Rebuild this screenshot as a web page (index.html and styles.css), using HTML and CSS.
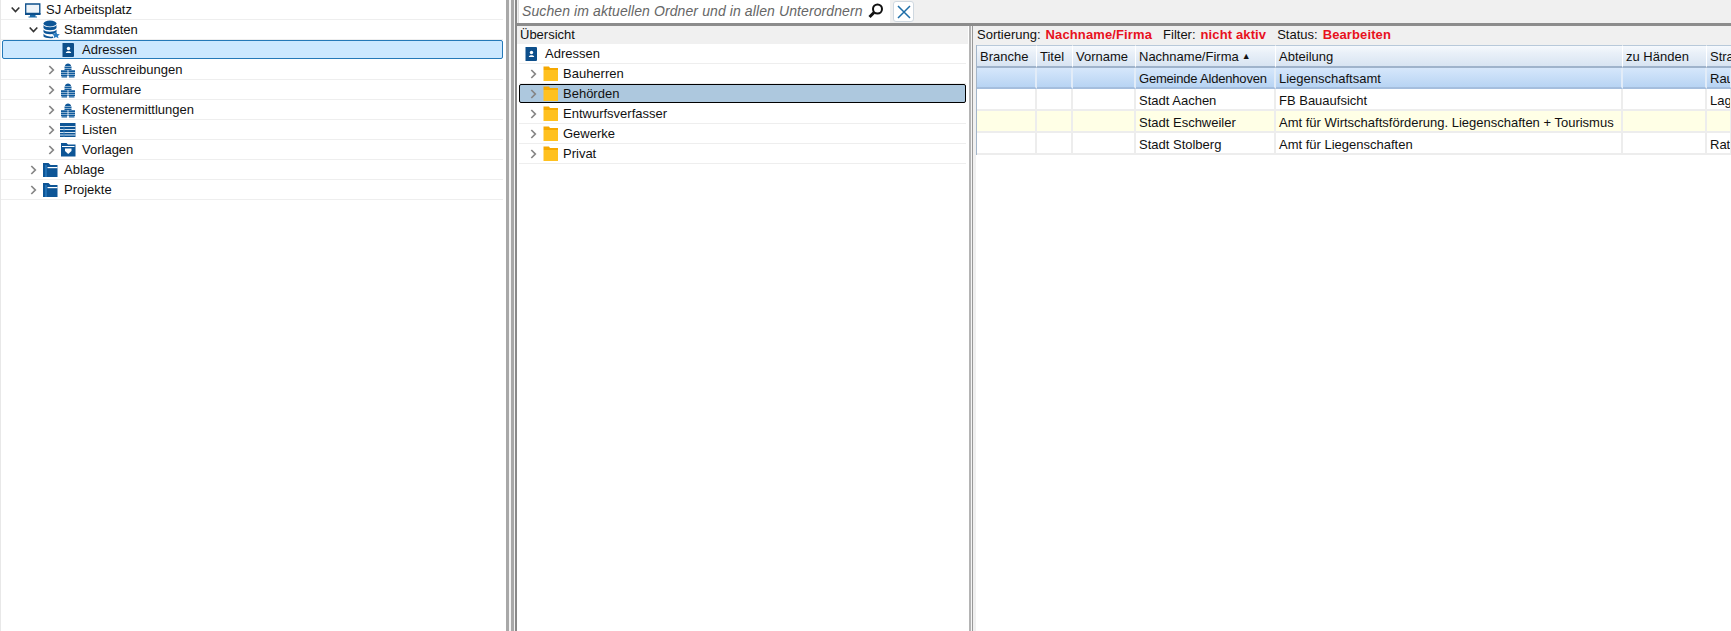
FILE: index.html
```html
<!DOCTYPE html>
<html lang="de">
<head>
<meta charset="utf-8">
<title>SJ Arbeitsplatz</title>
<link rel="stylesheet" href="styles.css">
</head>
<body>
<svg class="defs" width="0" height="0" aria-hidden="true">
  <defs>
    <symbol id="chev-r" viewBox="0 0 18 20"><path d="M7.300 7 L11.300 11 L7.300 15" fill="none" stroke="#858585" stroke-width="1.700"/></symbol>
    <symbol id="chev-d" viewBox="0 0 18 20"><path d="M5.700 8.500 L9.500 12.500 L13.300 8.500" fill="none" stroke="#333" stroke-width="1.600"/></symbol>
    <symbol id="monitor" viewBox="0 0 18 20"><path d="M1.700 5 H15.800 V14.500 H1.700 Z" fill="#eef4f9" stroke="#0d4f8b" stroke-width="1.300"/><path d="M1 14 H16.500 V16 H1 Z" fill="#0d4f8b"/><path d="M6 16 H11.500 V17.500 H13 V18.500 H4.500 V17.500 H6 Z" fill="#1a6aa8"/></symbol>
    <symbol id="db" viewBox="0 0 18 20"><ellipse cx="8" cy="4.500" rx="6.500" ry="3" fill="#0d5596"/><path d="M1.500 6 C3 9 13 9 14.500 6 V9 C13 12 3 12 1.500 9 Z" fill="#0d5596"/><path d="M1.500 10.500 C3 13.500 13 13.500 14.500 10.500 V13 C13 16 3 16 1.500 13 Z" fill="#0d5596"/><path d="M1.500 14.500 C3 17.500 10 18 11 17.500 V19 C7 19.500 3 19 1.500 17.500 Z" fill="#0d5596"/><path d="M14 12.500 L15.200 15 L17.800 15.200 L15.900 16.900 L16.500 19.300 L14 18 L11.500 19.300 L12.100 16.900 L10.200 15.200 L12.800 15 Z" fill="#2a7cc0"/></symbol>
    <symbol id="book" viewBox="0 0 18 20"><path d="M3 4 H13 Q14 4 14 5 V17 Q14 18 13 18 H3 Z" fill="#0d4f8b"/><path d="M2 5 H3.500 M2 7 H3.500 M2 9 H3.500 M2 11 H3.500 M2 13 H3.500 M2 15 H3.500 M2 17 H3.500" stroke="#0d4f8b" stroke-width="1"/><circle cx="8.500" cy="9.500" r="1.700" fill="#fff"/><path d="M5.800 14 C5.800 11.500 11.200 11.500 11.200 14 Z" fill="#fff"/></symbol>
    <symbol id="stack" viewBox="0 0 18 20"><path d="M5 7 C5 3.500 11 3.500 11 7 Z" fill="#0d5596"/><path d="M4.500 7.400 H11.500 V9 H4.500 Z M4.500 9.400 H11.500 V11 H4.500 Z" fill="#0f5a9c"/><path d="M1 11.300 H7.600 V13 H1 Z M1 13.400 H7.600 V15 H1 Z M1 15.400 H7.600 V17 H1 Z M1.500 17.300 H7.100 V18.600 H1.500 Z M8.400 11.300 H15 V13 H8.400 Z M8.400 13.400 H15 V15 H8.400 Z M8.400 15.400 H15 V17 H8.400 Z M8.900 17.300 H14.500 V18.600 H8.900 Z" fill="#0f5a9c"/></symbol>
    <symbol id="list" viewBox="0 0 18 20"><path d="M0 4 H15.500 V18 H0 Z" fill="#0d5596"/><path d="M0 7.500 H15.500 M0 10.500 H15.500 M0 13.500 H15.500 M0 16 H15.500" stroke="#d4e3f0" stroke-width="1"/><path d="M4 7.500 V18" stroke="#3f86bf" stroke-width=".8"/></symbol>
    <symbol id="tpl" viewBox="0 0 18 20"><path d="M1 4 H6.500 L8 5.500 H15.500 V17.500 H1 Z" fill="#0d5596"/><path d="M2 7 H14.500 V8 H2 Z" fill="#fff"/><path d="M5 9.500 H11.500 V12 L8.200 15 L5 12 Z" fill="#fff"/></symbol>
    <symbol id="bluefolder" viewBox="0 0 18 20"><path d="M1 4 H6.500 L8.500 6 H15.500 V18 H1 Z" fill="#0d5596"/><path d="M5.500 8 H15.500 V9.200 H5.500 Z" fill="#fff"/><path d="M3.300 6 H4.700 V18 H3.300 Z" fill="#2a7cc0"/></symbol>
    <symbol id="folder" viewBox="0 0 18 20"><path d="M1.500 3.500 H7 L8 5 H16 V7 H1.500 Z" fill="#f5a800"/><path d="M1.500 7 H16 V18 H1.500 Z" fill="#ffc11f"/></symbol>
  </defs>
</svg>
<div class="app">
  <nav class="pane-tree">
    <div class="row lv0"><svg class="chev"><use href="#chev-d"/></svg><svg class="ico"><use href="#monitor"/></svg><span>SJ Arbeitsplatz</span></div>
    <div class="row lv1"><svg class="chev"><use href="#chev-d"/></svg><svg class="ico"><use href="#db"/></svg><span>Stammdaten</span></div>
    <div class="row lv2 row-sel"><span class="chev"></span><svg class="ico"><use href="#book"/></svg><span>Adressen</span></div>
    <div class="row lv2"><svg class="chev"><use href="#chev-r"/></svg><svg class="ico"><use href="#stack"/></svg><span>Ausschreibungen</span></div>
    <div class="row lv2"><svg class="chev"><use href="#chev-r"/></svg><svg class="ico"><use href="#stack"/></svg><span>Formulare</span></div>
    <div class="row lv2"><svg class="chev"><use href="#chev-r"/></svg><svg class="ico"><use href="#stack"/></svg><span>Kostenermittlungen</span></div>
    <div class="row lv2"><svg class="chev"><use href="#chev-r"/></svg><svg class="ico"><use href="#list"/></svg><span>Listen</span></div>
    <div class="row lv2"><svg class="chev"><use href="#chev-r"/></svg><svg class="ico"><use href="#tpl"/></svg><span>Vorlagen</span></div>
    <div class="row lv1"><svg class="chev"><use href="#chev-r"/></svg><svg class="ico"><use href="#bluefolder"/></svg><span>Ablage</span></div>
    <div class="row lv1"><svg class="chev"><use href="#chev-r"/></svg><svg class="ico"><use href="#bluefolder"/></svg><span>Projekte</span></div>
  </nav>
  <div class="splitter"></div>
  <main class="work">
    <div class="toolbar">
      <div class="search">
        <span class="search-text">Suchen im aktuellen Ordner und in allen Unterordnern</span>
        <svg class="search-ico" width="18" height="18" viewBox="0 0 18 18"><circle cx="10.500" cy="7" r="4.500" fill="none" stroke="#111" stroke-width="2"/><path d="M7 10.500 L2.500 15" stroke="#111" stroke-width="3"/></svg>
      </div>
      <button class="close" type="button" aria-label="Schließen"><svg width="16" height="16" viewBox="0 0 16 16"><path d="M2 2 L14 14 M14 2 L2 14" stroke="#1f6ea8" stroke-width="1.500"/></svg></button>
    </div>
    <div class="panes">
      <section class="pane-mid">
        <div class="mid-head">Übersicht</div>
        <div class="mid-body">
          <div class="row m0"><svg class="ico"><use href="#book"/></svg><span>Adressen</span></div>
          <div class="row m1"><svg class="chev"><use href="#chev-r"/></svg><svg class="ico"><use href="#folder"/></svg><span>Bauherren</span></div>
          <div class="row m1 row-cur"><svg class="chev"><use href="#chev-r"/></svg><svg class="ico"><use href="#folder"/></svg><span>Behörden</span></div>
          <div class="row m1"><svg class="chev"><use href="#chev-r"/></svg><svg class="ico"><use href="#folder"/></svg><span>Entwurfsverfasser</span></div>
          <div class="row m1"><svg class="chev"><use href="#chev-r"/></svg><svg class="ico"><use href="#folder"/></svg><span>Gewerke</span></div>
          <div class="row m1"><svg class="chev"><use href="#chev-r"/></svg><svg class="ico"><use href="#folder"/></svg><span>Privat</span></div>
        </div>
      </section>
      <div class="splitter2"></div>
      <section class="pane-right">
        <div class="status">
          <span>Sortierung:</span><b>Nachname/Firma</b>
          <span>Filter:</span><b>nicht aktiv</b>
          <span>Status:</span><b>Bearbeiten</b>
        </div>
        <div class="table-wrap">
          <table class="grid">
            <colgroup>
              <col class="c1"><col class="c2"><col class="c3"><col class="c4"><col class="c5"><col class="c6"><col class="c7">
            </colgroup>
            <thead>
              <tr><th>Branche</th><th>Titel</th><th>Vorname</th><th>Nachname/Firma<i class="sort">▲</i></th><th>Abteilung</th><th>zu Händen</th><th>Stra</th></tr>
            </thead>
            <tbody>
              <tr class="sel"><td></td><td></td><td></td><td class="tight">Gemeinde Aldenhoven</td><td>Liegenschaftsamt</td><td></td><td>Rau</td></tr>
              <tr><td></td><td></td><td></td><td>Stadt Aachen</td><td>FB Bauaufsicht</td><td></td><td>Lag</td></tr>
              <tr class="hl"><td></td><td></td><td></td><td>Stadt Eschweiler</td><td>Amt für Wirtschaftsförderung. Liegenschaften + Tourismus</td><td></td><td></td></tr>
              <tr><td></td><td></td><td></td><td>Stadt Stolberg</td><td>Amt für Liegenschaften</td><td></td><td>Rat</td></tr>
            </tbody>
          </table>
        </div>
      </section>
    </div>
  </main>
</div>
</body>
</html>
```
FILE: styles.css
```css
* { box-sizing: border-box; }
html, body { margin: 0; height: 100%; overflow: hidden; background: #fff; }
body { font: 13px "Liberation Sans", Arial, sans-serif; color: #111; }
.defs { position: absolute; }
.app { display: flex; height: 631px; width: 1731px; }

.pane-tree { width: 505px; flex: none; border-left: 1px solid #e8e8e8; padding-right: 2px; }
.splitter { width: 12px; flex: none; background: linear-gradient(to right, #fff 0 1px, #a8a8a8 1px 4px, #f4f4f4 4px 6px, #a8a8a8 6px 9px, #f4f4f4 9px 10px, #888 10px 12px); }

.row { display: flex; align-items: center; height: 20px; border-bottom: 1px solid #eeeeee; white-space: nowrap; }
.chev { width: 18px; height: 20px; flex: none; margin-top: -1px; }
.ico { width: 18px; height: 20px; flex: none; margin-top: -1px; }
.row .ico + span { margin-left: 4px; }
.lv0 { padding-left: 5px; }
.lv1 { padding-left: 23px; }
.lv2 { padding-left: 41px; }
.row-sel { margin-left: 1px; padding-left: 39px; background: #cce8ff; border: 1px solid #2579b8; border-radius: 2px; height: 19px; margin-bottom: 1px; }

.work { flex: 1; min-width: 0; display: flex; flex-direction: column; }
.toolbar { display: flex; height: 26px; flex: none; background: #f0f0f0; border-bottom: 3px solid #8c8c8c; padding-left: 1px; }
.search { width: 372px; height: 23px; background: #fff; display: flex; align-items: center; justify-content: space-between; padding: 0 5px 1px 3px; border-left: 1px solid #ddd; }
.search-text { font-size: 14px; letter-spacing: .1px; font-style: italic; color: #666; }
.close { width: 21px; height: 21px; margin: 1px 0 0 3px; padding: 0; border: 1px solid #cfd8e0; border-radius: 3px; background: #fff; display: flex; align-items: center; justify-content: center; }

.panes { flex: 1; display: flex; min-height: 0; }
.pane-mid { width: 451px; flex: none; display: flex; flex-direction: column; }
.mid-head { height: 18px; background: #f0f0f0; padding-left: 3px; line-height: 18px; flex: none; }
.mid-body { flex: 1; padding: 0 2px 0 2px; }
.m0 { padding-left: 4px; }
.m1 { padding-left: 5px; }
.m1 .ico + span { margin-left: 3px; }
.row-cur { background: #adc8de; border: 1px solid #000; border-radius: 2px; height: 19px; margin-bottom: 1px; padding-left: 4px; }
.splitter2 { width: 5px; flex: none; background: linear-gradient(to right, #fff 0 1px, #b4b4b4 1px 3px, #f4f4f4 3px 4px, #999 4px 5px); }

.pane-right { flex: 1; min-width: 0; display: flex; flex-direction: column; overflow: hidden; }
.status { height: 19px; flex: none; background: #f0f0f0; padding-left: 4px; line-height: 18px; display: flex; }
.status b { color: #e8111d; font-weight: bold; margin: 0 11px 0 5px; letter-spacing: .12px; }
.table-wrap { flex: 1; padding-left: 3px; background: linear-gradient(#f0f0f0,#f0f0f0) left/3px 100% no-repeat #fff; overflow: hidden; }
.grid { border-collapse: separate; border-spacing: 0; table-layout: fixed; width: 755px; border-left: 1px solid #a3b5c9; }
.c1 { width: 60px; } .c2 { width: 36px; } .c3 { width: 63px; } .c4 { width: 140px; } .c5 { width: 347px; } .c6 { width: 84px; } .c7 { width: 25px; }
.grid th { height: 23px; font-weight: normal; text-align: left; padding: 1px 0 0 3px; white-space: nowrap; overflow: hidden;
  background: linear-gradient(#f6f9fd, #e9f0f8 35%, #d8e4f2); border-top: 1px solid #b8c9da; border-bottom: 2px solid #9fb3cb; border-right: 1px solid #fff; }
.grid td { height: 22px; padding: 3px 0 0 3px; white-space: nowrap; overflow: hidden; border-right: 2px solid #ededed; border-bottom: 2px solid #ededed; }
.grid td.tight { letter-spacing: -.2px; }
.sort { font-style: normal; font-size: 9px; margin-left: 3px; vertical-align: 2px; }
.sel td { height: 21px; padding-top: 2px; background: linear-gradient(#d6e7fb, #b8d4f3); border-bottom: 2px solid #a5bedd; border-right: 2px solid #e2ecf8; }
.hl td { background: #ffffe6; }
```
